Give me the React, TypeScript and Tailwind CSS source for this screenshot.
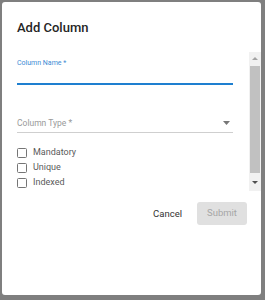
const options = ['Mandatory', 'Unique', 'Indexed'];

function Checkbox({ label }: { label: string }) {
  return (
    <label className="flex h-[15px] items-center">
      <span className="box-border h-[10px] w-[10px] rounded-[1.5px] border-[1.5px] border-[#757575]" />
      <span className="ml-[6px] text-[9px] leading-none text-[#5a5a5a]">{label}</span>
    </label>
  );
}

export default function App() {
  return (
    <div
      className="h-[300px] w-[265px] bg-[#7f7f7f] pb-[5px] pl-[2px] pr-[4px] pt-[2px]"
      style={{ fontFamily: 'Roboto, "Liberation Sans", sans-serif' }}
    >
      <div className="flex h-full flex-col rounded-[3px] bg-white">
        {/* title */}
        <div className="px-[15px] pt-[16px] pb-[14px]">
          <h2 className="text-[13px] font-medium leading-[20px] text-[#262626]">Add Column</h2>
        </div>

        {/* scrolling content */}
        <div className="flex h-[139px]">
          <div className="flex-1 pl-[15px] pr-[16px]">
            <div className="mt-[6px] text-[7px] leading-[10px] text-[#3d8bd4]">Column Name *</div>
            <div className="mt-[15px] h-[2px] bg-[#1e7fd0]" />

            <div className="mt-[32px] flex items-center justify-between text-[8.5px] leading-[12px] text-[#9a9a9a]">
              <span>Column Type *</span>
              <svg width="7" height="4" viewBox="0 0 7 4" className="mr-[3px]">
                <path d="M0 0h7L3.5 4z" fill="#777777" />
              </svg>
            </div>
            <div className="mt-[3px] h-px bg-[#cfcfcf]" />

            <div className="mt-[12px] flex flex-col">
              {options.map((o) => (
                <Checkbox key={o} label={o} />
              ))}
            </div>
          </div>

          {/* scrollbar */}
          <div className="flex w-[12px] flex-col bg-[#f1f1f1]">
            <div className="flex h-[12px] items-center justify-center">
              <svg width="6" height="3" viewBox="0 0 6 3">
                <path d="M0 3h6L3 0z" fill="#a3a3a3" />
              </svg>
            </div>
            <div className="mx-[1px] mt-[2px] h-[107px] bg-[#c1c1c1]" />
            <div className="flex flex-1 items-center justify-center">
              <svg width="6" height="3" viewBox="0 0 6 3">
                <path d="M0 0h6L3 3z" fill="#505050" />
              </svg>
            </div>
          </div>
        </div>

        {/* actions */}
        <div className="mt-[11px] flex items-center justify-end gap-[7px] pr-[14px]">
          <button className="rounded px-[8px] py-[6px] text-[9.5px] leading-[11px] text-[#333333]">
            Cancel
          </button>
          <button
            disabled
            className="h-[23px] w-[50px] rounded-[3px] bg-[#e0e0e0] text-[9.5px] text-[#a6a6a6]"
          >
            Submit
          </button>
        </div>
      </div>
    </div>
  );
}
